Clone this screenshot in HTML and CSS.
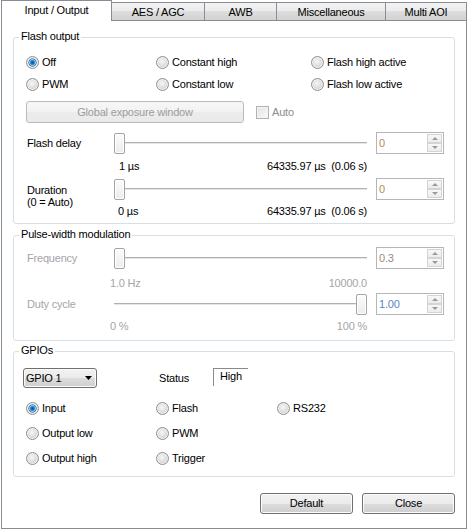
FILE: index.html
```html
<!DOCTYPE html>
<html>
<head>
<meta charset="utf-8">
<title>Input / Output</title>
<link rel="stylesheet" href="styles.css">
</head>
<body>
<div class="tabs">
  <div class="tab active">Input / Output</div>
  <div class="tab w-aes">AES / AGC</div>
  <div class="tab w-awb">AWB</div>
  <div class="tab w-misc">Miscellaneous</div>
  <div class="tab w-aoi">Multi AOI</div>
</div>
<div class="pane">
  <div class="group g-flash">
    <div class="caption">Flash output</div>
    <div class="radio-grid">
      <div class="radio"><span class="dot on"></span>Off</div>
      <div class="radio"><span class="dot"></span>Constant high</div>
      <div class="radio"><span class="dot"></span>Flash high active</div>
      <div class="radio"><span class="dot"></span>PWM</div>
      <div class="radio"><span class="dot"></span>Constant low</div>
      <div class="radio"><span class="dot"></span>Flash low active</div>
    </div>
    <div class="exposure-row">
      <div class="btn-disabled">Global exposure window</div>
      <span class="check"></span>
      <span class="check-label">Auto</span>
    </div>
    <div class="slider-grid">
      <div class="lbl">Flash delay</div>
      <div class="slider"><span class="thumb"></span></div>
      <div class="spin"><span class="spin-val tan">0</span><span class="spin-btns"><span class="spin-btn"><span class="arr-up"></span></span><span class="spin-btn"><span class="arr-down"></span></span></span></div>
      <div class="scale top6 inset5"><span>1 µs</span><span>64335.97 µs&nbsp; (0.06 s)</span></div>
      <div class="lbl lbl-2">Duration<br>(0 = Auto)</div>
      <div class="slider"><span class="thumb"></span></div>
      <div class="spin"><span class="spin-val tan">0</span><span class="spin-btns"><span class="spin-btn"><span class="arr-up"></span></span><span class="spin-btn"><span class="arr-down"></span></span></span></div>
      <div class="scale top5 inset4"><span>0 µs</span><span>64335.97 µs&nbsp; (0.06 s)</span></div>
    </div>
  </div>

  <div class="group g-pwm">
    <div class="caption">Pulse-width modulation</div>
    <div class="slider-grid disabled">
      <div class="lbl">Frequency</div>
      <div class="slider"><span class="thumb"></span></div>
      <div class="spin"><span class="spin-val mix">0.3</span><span class="spin-btns"><span class="spin-btn"><span class="arr-up"></span></span><span class="spin-btn"><span class="arr-down"></span></span></span></div>
      <div class="scale top8 outset4"><span>1.0 Hz</span><span>10000.0</span></div>
      <div class="lbl">Duty cycle</div>
      <div class="slider end"><span class="thumb"></span></div>
      <div class="spin"><span class="spin-val blue">1.00</span><span class="spin-btns"><span class="spin-btn"><span class="arr-up"></span></span><span class="spin-btn"><span class="arr-down"></span></span></span></div>
      <div class="scale top5 outset4"><span>0 %</span><span>100 %</span></div>
    </div>
  </div>

  <div class="group g-gpio">
    <div class="caption">GPIOs</div>
    <div class="gpio-top">
      <div class="combo"><span>GPIO 1</span><svg class="combo-arrow" width="7" height="4" viewBox="0 0 7 4"><polygon points="0,0 7,0 3.5,4" fill="#000"/></svg></div>
      <span class="status">Status</span>
      <span class="status-box">High</span>
    </div>
    <div class="radio-grid">
      <div class="radio"><span class="dot on"></span>Input</div>
      <div class="radio"><span class="dot"></span>Flash</div>
      <div class="radio"><span class="dot"></span>RS232</div>
      <div class="radio"><span class="dot"></span>Output low</div>
      <div class="radio"><span class="dot"></span>PWM</div>
      <span></span>
      <div class="radio"><span class="dot"></span>Output high</div>
      <div class="radio"><span class="dot"></span>Trigger</div>
    </div>
  </div>

  <div class="actions">
    <div class="btn">Default</div>
    <div class="btn">Close</div>
  </div>
</div>
</body>
</html>
```
FILE: styles.css
```css
* { box-sizing: border-box; }
html, body { margin: 0; padding: 0; background: #fff; }
body {
  width: 468px;
  height: 530px;
  overflow: hidden;
  font-family: "Liberation Sans", Arial, sans-serif;
  font-size: 11px;
  line-height: 13px;
  letter-spacing: -0.2px;
  color: #000;
}

/* tabs */
.tabs {
  display: flex;
  align-items: flex-end;
  height: 20px;
  padding-left: 1px;
  position: relative;
  z-index: 1;
}
.tab {
  height: 18px;
  padding-top: 1px;
  border-top: 1px solid #898c95;
  border-right: 1px solid #898c95;
  background: linear-gradient(#f3f3f3, #ebebeb 50%, #dddddd 50%, #d2d2d2);
  display: flex;
  align-items: center;
  justify-content: center;
  white-space: nowrap;
}
.tab.active {
  width: 111px;
  height: 21px;
  margin-bottom: -1px;
  padding-top: 0;
  padding-bottom: 2px;
  border-left: 1px solid #898c95;
  background: #fff;
}
.w-aes { width: 93px; }
.w-awb { width: 72px; }
.w-misc { width: 109px; }
.w-aoi { width: 81px; }

/* pane */
.pane {
  margin-left: 1px;
  width: 466px;
  height: 509px;
  border: 1px solid #898c95;
  padding: 16px 11px 0 11px;
  background: #fff;
}

.group {
  position: relative;
  border: 1px solid #d5dfe5;
  border-radius: 3px;
}
.caption {
  position: absolute;
  top: -8px;
  left: 5px;
  padding: 0 2px;
  background: #fff;
  white-space: nowrap;
}
.g-pwm { margin-top: 11px; }
.g-gpio { margin-top: 10px; }

/* radios */
.radio-grid {
  display: grid;
  padding-left: 12px;
}
.g-flash .radio-grid {
  padding-top: 13px;
  grid-template-columns: 130px 155px auto;
  grid-auto-rows: 22px;
}
.g-gpio .radio-grid {
  margin-top: 8px;
  padding-bottom: 5px;
  grid-template-columns: 130px 121px auto;
  grid-auto-rows: 25px;
}
.radio {
  display: flex;
  align-items: center;
  gap: 3px;
  white-space: nowrap;
}
.dot {
  width: 13px;
  height: 13px;
  flex: none;
  border-radius: 50%;
  border: 1px solid #8e8f8f;
  background: radial-gradient(circle at 45% 40%, #f7f7f7 0, #e6e6e6 3px, #d3d3d3 6px);
  box-shadow: inset 0 0 0 1px #f2f2f2;
}
.dot.on {
  background:
    radial-gradient(circle at 50% 50%, #0e4f95 0, #1b68b5 1.2px, #3a93d8 2.2px, #8fd0f5 3px, #2c6aa5 3.8px, rgba(0,0,0,0) 4.4px),
    radial-gradient(circle at 45% 40%, #f7f7f7 0, #e6e6e6 3px, #d3d3d3 6px);
}

/* exposure row */
.exposure-row {
  display: flex;
  align-items: center;
  height: 22px;
  margin-top: 6px;
  padding-left: 12px;
}
.btn-disabled {
  width: 218px;
  height: 22px;
  border: 1px solid #b9bcbf;
  border-radius: 3px;
  background: linear-gradient(#f7f7f7, #f2f2f2 50%, #ececec 50%, #eaeaea);
  color: #9c9c9c;
  display: flex;
  align-items: center;
  justify-content: center;
}
.check {
  width: 13px;
  height: 13px;
  margin-left: 12px;
  border: 1px solid #b1b1b1;
  background: linear-gradient(135deg, #e4e4e4, #f9f9f9);
  box-shadow: inset 0 0 0 1px #f4f4f4;
}
.check-label {
  margin-left: 3px;
  color: #8c8c8c;
}

/* sliders */
.slider-grid {
  display: grid;
  grid-template-columns: 78px 253px 68px;
  column-gap: 9px;
  padding-left: 13px;
}
.g-flash .slider-grid {
  margin-top: 9px;
  grid-template-rows: 22px 24px 22px 23px;
}
.g-pwm .slider-grid {
  padding-top: 11px;
  grid-template-rows: 22px 24px 22px 25px;
}
.lbl {
  grid-column: 1;
  align-self: center;
  white-space: nowrap;
}
.lbl-2 {
  grid-row: span 2;
  align-self: start;
  padding-top: 6px;
  line-height: 12px;
}
.slider {
  grid-column: 2;
  height: 22px;
  display: flex;
  align-items: flex-start;
  background: linear-gradient(to bottom, rgba(0,0,0,0) 10px, #b0b0b0 10px, #b0b0b0 11px, #e6e6e6 11px, #e6e6e6 12px, rgba(0,0,0,0) 12px);
}
.slider.end { justify-content: flex-end; }
.thumb {
  width: 11px;
  height: 21px;
  margin-top: 1px;
  border: 1px solid #a4a4a4;
  border-radius: 2px;
  background: linear-gradient(#fcfcfc, #ececec);
  box-shadow: inset 0 0 0 1px #fff;
}
.spin {
  grid-column: 3;
  height: 22px;
  border: 1px solid #b4b6b9;
  padding: 1px;
  display: flex;
  align-items: stretch;
  justify-content: space-between;
}
.spin-val {
  align-self: center;
  padding-left: 1px;
}
.tan { color: #b48a60; }
.mix { color: #9a8c82; }
.blue { color: #5d84c0; }
.spin-btns {
  width: 15px;
  display: flex;
  flex-direction: column;
}
.spin-btn {
  flex: 1;
  border: 1px solid #d2d4d6;
  background: linear-gradient(#f8f8f8, #ececec);
  display: flex;
  align-items: center;
  justify-content: center;
}
.arr-up, .arr-down {
  width: 0;
  height: 0;
  border-left: 3px solid transparent;
  border-right: 3px solid transparent;
}
.arr-up { border-bottom: 3px solid #9a9a9a; }
.arr-down { border-top: 3px solid #9a9a9a; }

.scale {
  grid-column: 2;
  display: flex;
  justify-content: space-between;
  white-space: nowrap;
}
.top5 { padding-top: 5px; }
.top6 { padding-top: 6px; }
.top8 { padding-top: 8px; }
.inset5 { padding-left: 5px; }
.inset4 { padding-left: 4px; }
.outset4 { margin-left: -4px; }

.disabled { color: #a5a5a5; }

/* gpio */
.gpio-top {
  display: flex;
  align-items: center;
  height: 20px;
  margin-top: 16px;
  padding-left: 9px;
}
.combo {
  width: 74px;
  height: 20px;
  border: 1px solid #707070;
  border-radius: 3px;
  background: linear-gradient(#f2f2f2, #ebebeb 50%, #dddddd 50%, #cfcfcf);
  box-shadow: inset 0 0 0 1px #fbfbfb;
  display: flex;
  align-items: center;
  justify-content: space-between;
  padding: 0 4px 0 2px;
}
.combo-arrow { display: block; }
.status {
  width: 54px;
  margin-left: 62px;
}
.status-box {
  align-self: flex-start;
  width: 35px;
  height: 18px;
  border-top: 1px solid #8a8a8a;
  border-left: 1px solid #8a8a8a;
  padding: 1px 0 0 6px;
}

/* buttons */
.actions {
  display: flex;
  justify-content: flex-end;
  gap: 9px;
  margin-top: 16px;
}
.btn {
  width: 93px;
  height: 21px;
  border: 1px solid #707070;
  border-radius: 3px;
  background: linear-gradient(#f2f2f2, #ebebeb 50%, #dddddd 50%, #cfcfcf);
  box-shadow: inset 0 0 0 1px #fcfcfc;
  display: flex;
  align-items: center;
  justify-content: center;
}
```
